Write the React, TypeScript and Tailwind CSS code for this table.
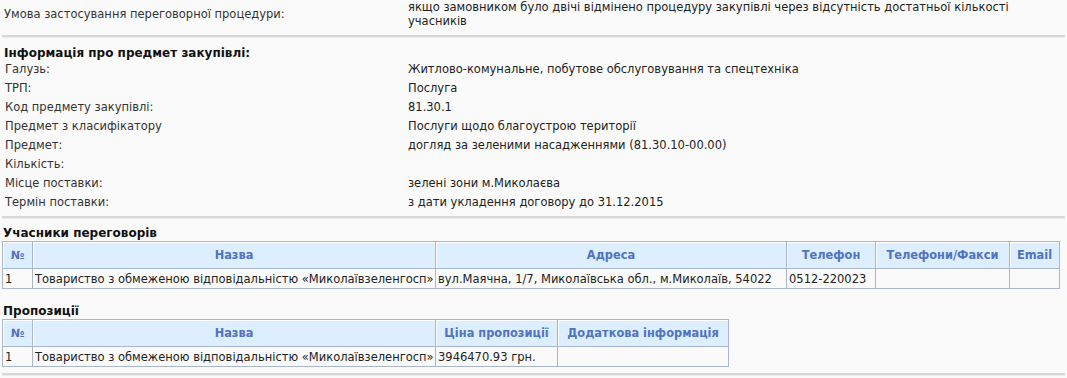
import React from "react";

const Hr = () => (
  <div className="mx-[2px] h-[3px] border-t-2 border-b border-t-[#d8d8d8] border-b-[#ececec]" />
);

const infoRows: [string, string][] = [
  ["Галузь:", "Житлово-комунальне, побутове обслуговування та спецтехніка"],
  ["ТРП:", "Послуга"],
  ["Код предмету закупівлі:", "81.30.1"],
  ["Предмет з класифікатору", "Послуги щодо благоустрою території"],
  ["Предмет:", "догляд за зеленими насадженнями (81.30.10-00.00)"],
  ["Кількість:", ""],
  ["Місце поставки:", "зелені зони м.Миколаєва"],
  ["Термін поставки:", "з дати укладення договору до 31.12.2015"],
];

const th =
  "border border-[#a9b6cb] bg-[#ddeeff] text-[#5073c0] font-bold text-[11.4px] text-center align-middle h-[27px] px-[2px] shadow-[inset_1px_1px_0_#ffffff] whitespace-nowrap overflow-hidden";
const td = "border border-[#a9b6cb] align-middle h-[20px] px-[2px] whitespace-nowrap overflow-hidden text-[#222]";

export default function App() {
  return (
    <div className="w-[1067px] h-[378px] overflow-hidden bg-[#fafafa] font-['DejaVu_Sans',sans-serif] text-[11.5px] leading-[14px] text-[#222]">
      <div className="flex items-center mt-[-2px] h-[32px]">
        <div className="w-[408px] pl-[4px] text-[#333]">Умова застосування переговорної процедури:</div>
        <div className="flex-1">
          <div>якщо замовником було двічі відмінено процедуру закупівлі через відсутність достатньої кількості</div>
          <div>учасників</div>
        </div>
      </div>
      <div className="mt-[5px]">
        <Hr />
      </div>
      <div className="mt-[8px] pl-[4px] font-bold text-[12px] text-[#111]">Інформація про предмет закупівлі:</div>
      <div>
        {infoRows.map(([l, v]) => (
          <div key={l} className="flex h-[19px] leading-[19px]">
            <div className="w-[408px] pl-[5px] text-[#333]">{l}</div>
            <div className="flex-1">{v}</div>
          </div>
        ))}
      </div>
      <div className="mt-[4px]">
        <Hr />
      </div>
      <div className="mt-[7px] pl-[3px] font-bold text-[12px] text-[#111]">Учасники переговорів</div>
      <table className="mt-[1px] ml-[2px] w-[1057px] table-fixed border-collapse">
        <colgroup>
          <col className="w-[30px]" />
          <col className="w-[403px]" />
          <col className="w-[351px]" />
          <col className="w-[89px]" />
          <col className="w-[134px]" />
          <col className="w-[50px]" />
        </colgroup>
        <thead>
          <tr>
            <th className={th}>№</th>
            <th className={th}>Назва</th>
            <th className={th}>Адреса</th>
            <th className={th}>Телефон</th>
            <th className={th}>Телефони/Факси</th>
            <th className={th}>Email</th>
          </tr>
        </thead>
        <tbody>
          <tr>
            <td className={td}>1</td>
            <td className={td}>Товариство з обмеженою відповідальністю «Миколаївзеленгосп»</td>
            <td className={td}>вул.Маячна, 1/7, Миколаївська обл., м.Миколаїв, 54022</td>
            <td className={td}>0512-220023</td>
            <td className={td}></td>
            <td className={td}></td>
          </tr>
        </tbody>
      </table>
      <div className="mt-[15px] pl-[3px] font-bold text-[12px] text-[#111]">Пропозиції</div>
      <table className="mt-[1px] ml-[2px] w-[726px] table-fixed border-collapse">
        <colgroup>
          <col className="w-[30px]" />
          <col className="w-[403px]" />
          <col className="w-[122px]" />
          <col className="w-[171px]" />
        </colgroup>
        <thead>
          <tr>
            <th className={th}>№</th>
            <th className={th}>Назва</th>
            <th className={th}>Ціна пропозиції</th>
            <th className={th}>Додаткова інформація</th>
          </tr>
        </thead>
        <tbody>
          <tr>
            <td className={td}>1</td>
            <td className={td}>Товариство з обмеженою відповідальністю «Миколаївзеленгосп»</td>
            <td className={td}>3946470.93 грн.</td>
            <td className={td}></td>
          </tr>
        </tbody>
      </table>
      <div className="mt-[6px]">
        <Hr />
      </div>
    </div>
  );
}
